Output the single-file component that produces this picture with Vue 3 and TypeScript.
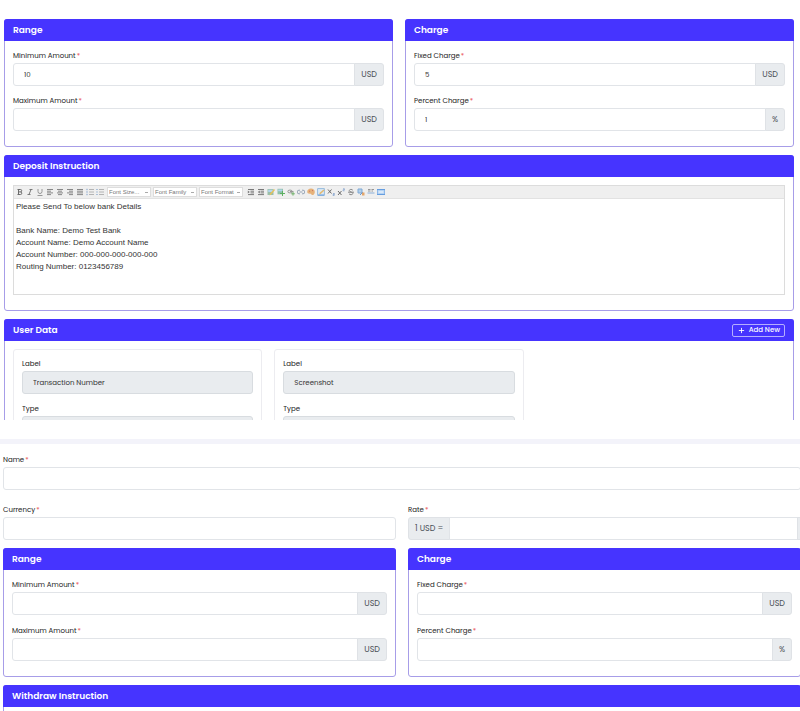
<script setup lang="ts">
import { ref } from 'vue'

interface Field {
  id: string
  label: string
  unit: string
  value: string
}

interface Group {
  title: string
  fields: Field[]
}

const makeGroups = (prefix: string, values: string[]): Group[] => [
  {
    title: 'Range',
    fields: [
      { id: `${prefix}-min`, label: 'Minimum Amount', unit: 'USD', value: values[0] },
      { id: `${prefix}-max`, label: 'Maximum Amount', unit: 'USD', value: values[1] },
    ],
  },
  {
    title: 'Charge',
    fields: [
      { id: `${prefix}-fixed`, label: 'Fixed Charge', unit: 'USD', value: values[2] },
      { id: `${prefix}-percent`, label: 'Percent Charge', unit: '%', value: values[3] },
    ],
  },
]

const depositGroups = ref<Group[]>(makeGroups('deposit', ['10', '', '5', '1']))
const withdrawGroups = ref<Group[]>(makeGroups('withdraw', ['', '', '', '']))

const instruction = ref(
  [
    'Please Send To below bank Details',
    '',
    'Bank Name: Demo Test Bank',
    'Account Name: Demo Account Name',
    'Account Number: 000-000-000-000-000',
    'Routing Number: 0123456789',
  ].join('\n'),
)

const userData = ref([
  { id: 'data-0', label: 'Transaction Number', type: '' },
  { id: 'data-1', label: 'Screenshot', type: '' },
])

const name = ref('')
const currency = ref('')
const rate = ref('')

interface Shape {
  d: string
  stroke?: string
  fill?: string
}

interface Tool {
  name: string
  shapes: Shape[]
}

const grey = '#777'

const formatTools: Tool[] = [
  { name: 'Bold', shapes: [{ d: 'M2.5 1.5v5M1.5 1.5h3a1.2 1.2 0 0 1 0 2.4H2.5M4.5 3.9a1.3 1.3 0 0 1 0 2.6h-3', stroke: '#555' }] },
  { name: 'Italic', shapes: [{ d: 'M3.5 1.5h3M1.5 6.5h3M5 1.5l-2 5', stroke: '#666' }] },
  { name: 'Underline', shapes: [{ d: 'M2 1v2.5a2 2 0 0 0 4 0V1M1.5 7.5h5', stroke: '#888' }] },
  { name: 'Align left', shapes: [{ d: 'M1 1.5h6M1 3.2h4M1 4.9h6M1 6.6h4', stroke: grey }] },
  { name: 'Align center', shapes: [{ d: 'M1 1.5h6M2 3.2h4M1 4.9h6M2 6.6h4', stroke: grey }] },
  { name: 'Align right', shapes: [{ d: 'M1 1.5h6M3 3.2h4M1 4.9h6M3 6.6h4', stroke: grey }] },
  { name: 'Justify', shapes: [{ d: 'M1 1.5h6M1 3.2h6M1 4.9h6M1 6.6h6', stroke: grey }] },
  { name: 'Ordered list', shapes: [{ d: 'M3 1.5h5M3 4h5M3 6.5h5', stroke: '#aaa' }, { d: 'M1 .8v1.4M1 3.3v1.4M1 5.8v1.4', stroke: '#6d93c4' }] },
  { name: 'Unordered list', shapes: [{ d: 'M3 1.5h5M3 4h5M3 6.5h5', stroke: '#aaa' }, { d: 'M.4 1.5h1.2M.4 4h1.2M.4 6.5h1.2', stroke: '#6d93c4' }] },
]

const insertTools: Tool[] = [
  { name: 'Indent', shapes: [{ d: 'M1 1.5h6M3.5 3.2H7M3.5 4.9H7M1 6.6h6', stroke: '#666' }, { d: 'M.8 2.5l2 1.5-2 1.5z', fill: '#666' }] },
  { name: 'Outdent', shapes: [{ d: 'M1 1.5h6M3.5 3.2H7M3.5 4.9H7M1 6.6h6', stroke: '#666' }, { d: 'M2.8 2.5L.8 4l2 1.5z', fill: '#666' }] },
  { name: 'Insert image', shapes: [{ d: 'M.5 1h6v6h-6z', fill: '#8bb7a0' }, { d: 'M1.2 1.7h4.6v2.3H1.2z', fill: '#a9d2f0' }, { d: 'M2.5 7.5l.8-2.3L7 1l1 1-3.7 4.2z', fill: '#e5bb42' }] },
  { name: 'Upload image', shapes: [{ d: 'M.5 .8H6v5.5H.5z', fill: '#7fb9a0' }, { d: 'M1.2 1.5h4v1.8h-4z', fill: '#a9d2f0' }, { d: 'M5.5 3v5M3 5.5h5', stroke: '#44a64a' }] },
  { name: 'Add link', shapes: [{ d: 'M2.2 2.2h1.6a1.3 1.3 0 0 1 0 2.6H2.2a1.3 1.3 0 0 1 0-2.6zM3 3.5h3.5', stroke: '#888' }, { d: 'M6 4v3.6M4.2 5.8h3.6', stroke: '#5ca654' }] },
  { name: 'Remove link', shapes: [{ d: 'M3 2.2H2a1.8 1.8 0 0 0 0 3.6h1M5 2.2h1a1.8 1.8 0 0 1 0 3.6H5M2.5 4h3', stroke: '#8797ad' }] },
  { name: 'Text color', shapes: [{ d: 'M4 .6c2.2 0 3.8 1.4 3.8 3.3S6.2 7.4 5 7c-.8-.3-.5-1.2-1.3-1.2C2.3 5.8.2 5.6.2 3.9S1.8.6 4 .6z', fill: '#e5a866' }, { d: 'M2.1 3.2h1M5 2.6h1', stroke: '#c65a4a' }] },
  { name: 'Background color', shapes: [{ d: 'M.6 .6h6.8v6.8H.6z', fill: '#d8e9f8', stroke: '#86b2dc' }, { d: 'M2 6.8l.7-2L6.5 1.5l1 1-3.8 3.6z', fill: '#e2b15c' }, { d: 'M1 7h6', stroke: '#5a94d6' }] },
  { name: 'Subscript', shapes: [{ d: 'M1 1.5l3.5 4M4.5 1.5l-3.5 4', stroke: '#555' }, { d: 'M6 5.5h1.5v1H6v1h1.5', stroke: '#8ba7cf' }] },
  { name: 'Superscript', shapes: [{ d: 'M1 3l3.5 4M4.5 3L1 7', stroke: '#555' }, { d: 'M6 .8h1.5v1H6v1h1.5', stroke: '#8ba7cf' }] },
  { name: 'Strike through', shapes: [{ d: 'M5.8 2.2C5 1 2.3 1.2 2.3 2.6c0 1.6 3.5 1.2 3.5 2.9 0 1.5-3 1.6-3.8.3M1 4.2h6', stroke: '#777' }] },
  { name: 'Remove formatting', shapes: [{ d: 'M1 1h4v4H1z', fill: '#a9cbea', stroke: '#6c9dd1' }, { d: 'M3 7l3-3', stroke: '#5888c4' }, { d: 'M5 4.5h2.5v3H5z', fill: '#e39a55' }] },
  { name: 'Horizontal rule', shapes: [{ d: 'M1 1.5h2.5M4.5 1.5H7M1 3h2.5M4.5 3H6', stroke: '#888' }, { d: 'M.5 5h7', stroke: '#7ba4d4' }] },
  { name: 'Edit HTML', shapes: [{ d: 'M0 1.5h8v5H0z', fill: '#a8cdf5', stroke: '#4f8fdd' }, { d: 'M1.5 4h5', stroke: '#fff' }] },
]

const fontMenus = ['Font Size...', 'Font Family', 'Font Format']

const addUserData = (): void => {
  userData.value.push({ id: `data-${userData.value.length}`, label: '', type: '' })
}
</script>

<template>
  <main class="page">
    <section class="deposit">
      <div class="columns">
        <section v-for="group in depositGroups" :key="group.title" class="card">
          <header class="card-head"><h2>{{ group.title }}</h2></header>
          <div class="card-body fields">
            <div v-for="field in group.fields" :key="field.id" class="field">
              <label :for="field.id">{{ field.label }}<span class="star">*</span></label>
              <div class="group">
                <input :id="field.id" v-model="field.value" type="text" />
                <span class="addon">{{ field.unit }}</span>
              </div>
            </div>
          </div>
        </section>
      </div>

      <section class="card">
        <header class="card-head"><h2 id="instruction-title">Deposit Instruction</h2></header>
        <div class="card-body editor-body">
          <div class="editor">
            <div class="toolbar">
              <button v-for="tool in formatTools" :key="tool.name" type="button" class="tool" :aria-label="tool.name">
                <svg viewBox="0 0 8 8">
                  <path v-for="(s, i) in tool.shapes" :key="i" :d="s.d" :stroke="s.stroke ?? 'none'" :fill="s.fill ?? 'none'" />
                </svg>
              </button>
              <div class="menus">
                <select v-for="menu in fontMenus" :key="menu" class="menu" :aria-label="menu">
                  <option>{{ menu }}</option>
                </select>
              </div>
              <button v-for="tool in insertTools" :key="tool.name" type="button" class="tool" :aria-label="tool.name">
                <svg viewBox="0 0 8 8">
                  <path v-for="(s, i) in tool.shapes" :key="i" :d="s.d" :stroke="s.stroke ?? 'none'" :fill="s.fill ?? 'none'" />
                </svg>
              </button>
            </div>
            <textarea v-model="instruction" aria-labelledby="instruction-title"></textarea>
          </div>
        </div>
      </section>

      <section class="card open">
        <header class="card-head">
          <h2>User Data</h2>
          <button type="button" class="add" @click="addUserData">
            <svg viewBox="0 0 8 8"><path d="M4 1v6M1 4h6" stroke="currentColor" /></svg>
            Add New
          </button>
        </header>
        <div class="card-body data-list">
          <div v-for="item in userData" :key="item.id" class="data-item">
            <div class="field">
              <label :for="`${item.id}-label`">Label</label>
              <input :id="`${item.id}-label`" v-model="item.label" type="text" readonly />
            </div>
            <div class="field">
              <label :for="`${item.id}-type`">Type</label>
              <input :id="`${item.id}-type`" v-model="item.type" type="text" readonly />
            </div>
          </div>
        </div>
      </section>
    </section>

    <section class="withdraw">
      <div class="field">
        <label for="name">Name<span class="star">*</span></label>
        <input id="name" v-model="name" type="text" />
      </div>
      <div class="columns rate-row">
        <div class="field">
          <label for="currency">Currency<span class="star">*</span></label>
          <input id="currency" v-model="currency" type="text" />
        </div>
        <div class="field">
          <label for="rate">Rate<span class="star">*</span></label>
          <div class="group">
            <span class="addon lead">1 USD =</span>
            <input id="rate" v-model="rate" type="text" />
            <span class="addon edge"></span>
          </div>
        </div>
      </div>

      <div class="columns">
        <section v-for="group in withdrawGroups" :key="group.title" class="card">
          <header class="card-head"><h2>{{ group.title }}</h2></header>
          <div class="card-body fields">
            <div v-for="field in group.fields" :key="field.id" class="field">
              <label :for="field.id">{{ field.label }}<span class="star">*</span></label>
              <div class="group">
                <input :id="field.id" v-model="field.value" type="text" />
                <span class="addon">{{ field.unit }}</span>
              </div>
            </div>
          </div>
        </section>
      </div>

      <section class="card open">
        <header class="card-head"><h2>Withdraw Instruction</h2></header>
        <div class="card-body stub"></div>
      </section>
    </section>
  </main>
</template>

<style>
body {
  margin: 0;
  background: #fff;
}
</style>

<style scoped>
.page,
.page * {
  box-sizing: border-box;
}

.page {
  overflow: hidden;
  font-family: Poppins, Inter, 'Liberation Sans', sans-serif;
  font-size: 7px;
  color: #222;
}

.deposit {
  display: flex;
  flex-direction: column;
  gap: 8px;
  padding: 19px 6px 19px 4px;
}

.withdraw {
  display: flex;
  flex-direction: column;
  gap: 8px;
  margin-right: -1px;
  padding: 10px 0 0 3px;
  border-top: 5px solid #f3f3fa;
}

.rate-row {
  padding-top: 6px;
}

.columns {
  display: grid;
  grid-template-columns: 1fr 1fr;
  gap: 12px;
}

.card {
  border: 1px solid #a79de8;
  border-radius: 3px;
  background: #fff;
}

.card.open {
  border-bottom: 0;
  border-radius: 3px 3px 0 0;
}

.card-head {
  display: flex;
  align-items: center;
  justify-content: space-between;
  height: 22px;
  margin: -1px -1px 0;
  padding: 0 9px;
  border-radius: 3px 3px 0 0;
  background: #4634ff;
  color: #fff;
}

.card-head h2 {
  margin: 0;
  font-size: 9px;
  font-weight: 600;
  line-height: 12px;
}

.card-body {
  padding: 8px;
}

.fields {
  display: flex;
  flex-direction: column;
  gap: 9px;
  padding: 9px 8px 15px;
}

.withdraw .fields {
  gap: 10px;
}

.field {
  display: flex;
  flex-direction: column;
  gap: 2px;
  min-width: 0;
}

label {
  font-weight: 400;
  line-height: 11px;
}

.star {
  margin-left: 1px;
  color: #ea5455;
}

input {
  width: 100%;
  min-width: 0;
  height: 23px;
  padding: 0 10px;
  border: 1px solid #e1e4e8;
  border-radius: 3px;
  background: #fff;
  color: #333;
  font: inherit;
  outline: 0;
}

input[readonly] {
  background: #e9ecef;
  border-color: #d8dce0;
}

.group {
  display: flex;
}

.group input {
  flex: 1;
  border-radius: 3px 0 0 3px;
}

.addon {
  display: flex;
  align-items: center;
  margin-left: -1px;
  padding: 0 6px;
  border: 1px solid #dfe2e6;
  border-radius: 0 3px 3px 0;
  background: #e9ecef;
  color: #495057;
  font-size: 8px;
}

.addon.lead {
  margin: 0 -1px 0 0;
  border-radius: 3px 0 0 3px;
}

.addon.lead + input {
  border-radius: 0;
}

.addon.edge {
  padding: 0 1px;
  border-radius: 0;
}

.editor-body {
  padding-bottom: 15px;
}

.editor {
  border: 1px solid #dcdcdc;
}

.toolbar {
  display: flex;
  align-items: center;
  gap: 2px;
  height: 13px;
  padding: 0 2px;
  border-bottom: 1px solid #e2e2e2;
  background: #efefef;
}

.tool {
  width: 8px;
  height: 8px;
  padding: 0;
  border: 0;
  background: none;
  opacity: 0.85;
}

.tool svg {
  display: block;
  width: 8px;
  height: 8px;
}

.menus {
  display: flex;
  gap: 2px;
  padding: 0 2px 0 1px;
}

.menu {
  appearance: none;
  width: 44px;
  height: 10px;
  padding: 0 1px;
  border: 1px solid #ddd;
  border-radius: 0;
  background: linear-gradient(#aaa, #aaa) right 2px center / 3px 1px no-repeat #fff;
  color: #777;
  font-family: 'Liberation Sans', sans-serif;
  font-size: 6px;
  line-height: 8px;
}

textarea {
  display: block;
  width: 100%;
  height: 95px;
  padding: 2px 2px 0;
  border: 0;
  background: #fff;
  color: #333;
  font-family: 'Liberation Sans', sans-serif;
  font-size: 8px;
  line-height: 12px;
  resize: none;
  outline: 0;
  overflow: hidden;
}

.add {
  display: flex;
  align-items: center;
  gap: 4px;
  height: 13px;
  padding: 0 4px 0 5px;
  border: 1px solid #b5aeff;
  border-radius: 2px;
  background: none;
  color: #fff;
  font: inherit;
  font-weight: 500;
}

.add svg {
  width: 7px;
  height: 7px;
}

/* The list shows only the top of each entry. */
.data-list {
  display: grid;
  grid-template-columns: repeat(3, 1fr);
  gap: 12px;
  max-height: 79px;
  padding-bottom: 0;
  overflow: hidden;
}

.data-item {
  display: flex;
  flex-direction: column;
  gap: 9px;
  padding: 8px;
  border: 1px solid #ececf0;
  border-radius: 3px;
}

.stub {
  padding: 2px;
}
</style>
